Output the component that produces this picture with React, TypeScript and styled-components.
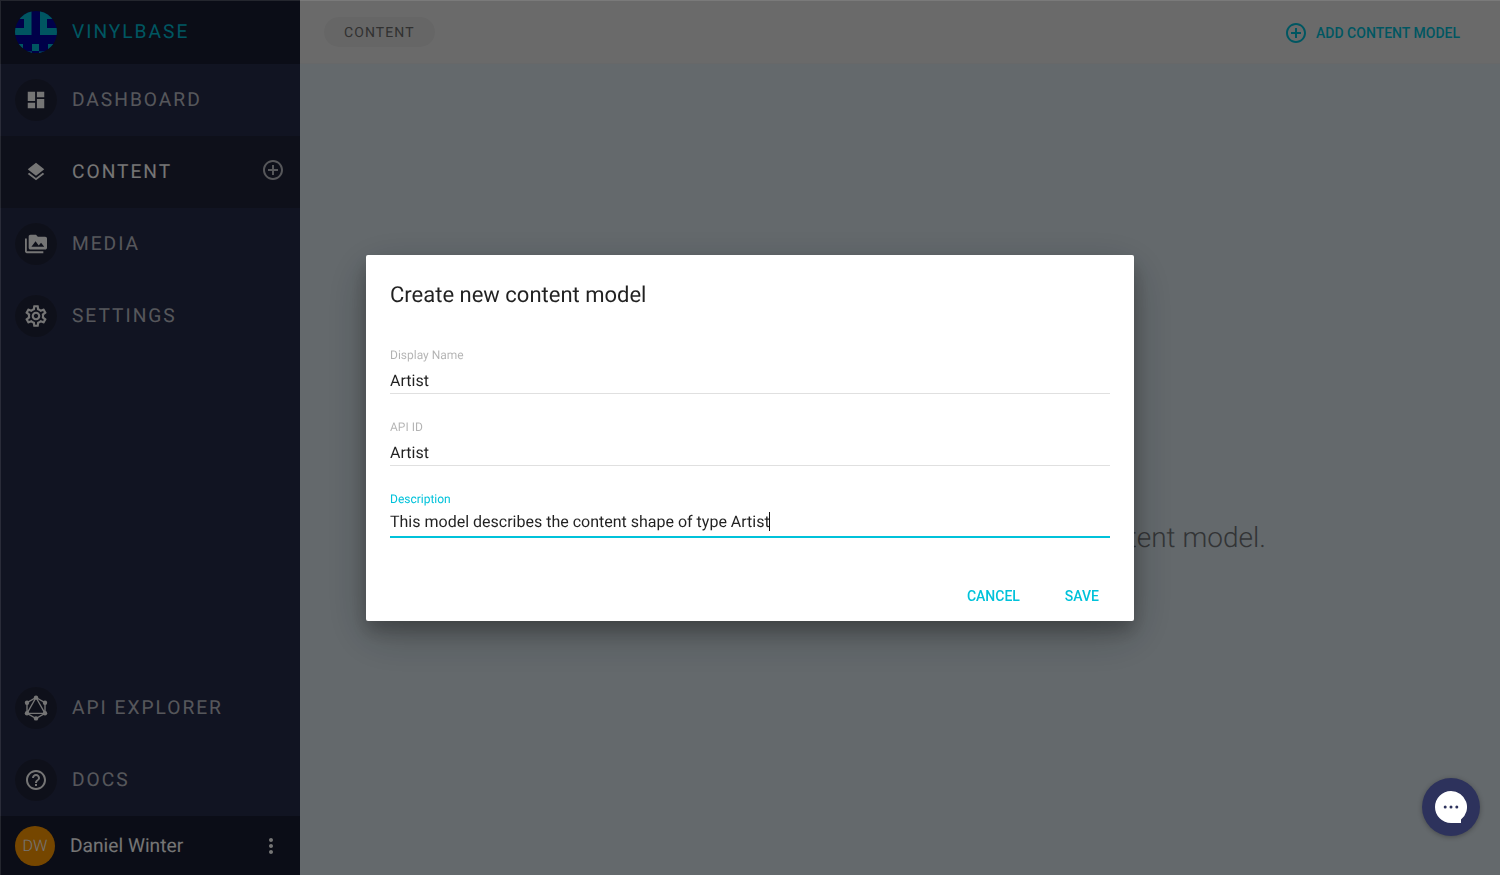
import React from "react";
import styled, { createGlobalStyle } from "styled-components";
import {
  MdDashboard,
  MdLayers,
  MdPermMedia,
  MdOutlineSettings,
  MdHelpOutline,
  MdAddCircleOutline,
  MdMoreVert,
} from "react-icons/md";

const GlobalStyle = createGlobalStyle`
  *, *::before, *::after { box-sizing: border-box; }
  body { margin: 0; font-family: Roboto, "Liberation Sans", sans-serif; overflow: hidden; text-rendering: geometricPrecision; }
  button { font-family: inherit; border: 0; background: none; padding: 0; cursor: pointer; }
  svg { display: block; }
`;

const Page = styled.div`
  display: flex;
  width: 100vw;
  height: 100vh;
  min-height: 875px;
`;

const Sidebar = styled.aside`
  display: flex;
  flex-direction: column;
  width: 300px;
  flex: none;
  background: #272d4b;
  color: #fff;
`;

const Brand = styled.div`
  display: flex;
  align-items: center;
  height: 64px;
  padding: 0 0 0 15px;
  gap: 15px;
  background: #191d32;
`;

const BrandName = styled.span`
  color: #00bcd4;
  font-size: 19.2px;
  letter-spacing: 1.98px;
  line-height: 24px;
`;

const NavItem = styled.a<{ $active?: boolean }>`
  display: flex;
  align-items: center;
  height: 72px;
  padding: 0 16px 0 15px;
  gap: 15px;
  font-size: 19.2px;
  letter-spacing: 1.98px;
  background: ${(p) => (p.$active ? "#20243a" : "transparent")};
  color: ${(p) => (p.$active ? "#fff" : "rgba(255, 255, 255, 0.7)")};
`;

const NavIcon = styled.span`
  display: flex;
  align-items: center;
  justify-content: center;
  width: 42px;
  height: 42px;
  border-radius: 50%;
  background: #20243a;
  color: #fff;
`;

const NavLabel = styled.span`
  flex: 1;
  line-height: 24px;
`;

const NavAdd = styled.button`
  color: rgba(255, 255, 255, 0.7);
  margin: 0 -1px 4px 0;
`;

const Spacer = styled.div`
  flex: 1;
`;

const UserBar = styled.div`
  display: flex;
  align-items: center;
  height: 59px;
  padding: 0 17px 0 15px;
  background: #191d32;
`;

const Avatar = styled.span`
  display: flex;
  align-items: center;
  justify-content: center;
  width: 40px;
  height: 40px;
  border-radius: 50%;
  background: #ff9800;
  color: #fff;
  font-size: 16px;
  font-weight: 300;
`;

const UserName = styled.span`
  flex: 1;
  margin: 1px 0 0 15px;
  font-size: 19.2px;
  line-height: 24px;
`;

const Main = styled.main`
  display: flex;
  flex-direction: column;
  flex: 1;
  background: #d9e5ec;
`;

const Toolbar = styled.header`
  display: flex;
  align-items: center;
  justify-content: space-between;
  height: 64px;
  padding: 0 40px 0 24px;
  background: #e8e8e8;
  border-bottom: 1px solid #e0e2e4;
`;

const Crumb = styled.span`
  display: flex;
  align-items: center;
  height: 30px;
  padding: 2px 20px 0;
  border-radius: 15px;
  background: #dedede;
  color: #6b6b6b;
  font-size: 14px;
  letter-spacing: 1.1px;
`;

const AddModel = styled.button`
  display: flex;
  align-items: center;
  gap: 8px;
  margin-top: 3px;
  color: #00bcd4;
  font-size: 14px;
  font-weight: 500;
`;

const EmptyState = styled.div`
  display: flex;
  align-items: center;
  justify-content: flex-end;
  flex: 1;
  padding: 136px 234px 0 0;
  color: #6f7275;
  font-size: 28px;
  font-weight: 300;
`;

const Overlay = styled.div`
  position: fixed;
  inset: 0;
  display: flex;
  align-items: center;
  justify-content: center;
  background: rgba(0, 0, 0, 0.54);
  box-shadow: inset 1px 1px 0 rgba(255, 255, 255, 0.1);
`;

const Dialog = styled.section`
  display: flex;
  flex-direction: column;
  width: 768px;
  height: 366px;
  margin-top: 1px;
  padding: 25px 24px 24px;
  border-radius: 2px;
  background: #fff;
  box-shadow: 0 14px 45px rgba(0, 0, 0, 0.25), 0 10px 18px rgba(0, 0, 0, 0.22);
`;

const DialogTitle = styled.h3`
  flex: none;
  margin: 0 0 36px;
  color: rgba(0, 0, 0, 0.87);
  font-size: 22px;
  font-weight: 400;
  line-height: 32px;
`;

const Field = styled.label<{ $focused?: boolean }>`
  display: flex;
  flex: none;
  flex-direction: column;
  height: 72px;
  color: ${(p) => (p.$focused ? "#00c2da" : "rgba(0, 0, 0, 0.3)")};
  font-size: 12px;
  line-height: 14px;
`;

const FieldLabel = styled.span`
  flex: none;
`;

const FieldValue = styled.span<{ $focused?: boolean }>`
  display: flex;
  align-items: center;
  height: 32px;
  padding-top: ${(p) => (p.$focused ? "1px" : "6px")};
  border-bottom: ${(p) => (p.$focused ? "2px solid #00c2da" : "1px solid #e0e0e0")};
  color: rgba(0, 0, 0, 0.87);
  font-size: 16px;
  line-height: 20px;
`;

const Caret = styled.i`
  width: 1px;
  height: 19px;
  margin-left: -1px;
  background: #111;
`;

const Actions = styled.div`
  display: flex;
  justify-content: flex-end;
  margin-top: 24px;
  padding-right: 11px;
  gap: 45px;
`;

const ActionButton = styled.button`
  color: #00c2da;
  font-size: 14px;
  font-weight: 500;
  line-height: 16px;
`;

const ChatButton = styled.button`
  position: fixed;
  right: 20.5px;
  bottom: 39px;
  display: flex;
  align-items: center;
  justify-content: center;
  width: 58px;
  height: 58px;
  border-radius: 50%;
  background: #2d325c;
  box-shadow: 0 1px 5px rgba(0, 0, 0, 0.3);
`;

const BrandMark = () => (
  <svg width="42" height="42" viewBox="0 0 42 42">
    <clipPath id="mark">
      <circle cx="21" cy="21" r="21" />
    </clipPath>
    <g clipPath="url(#mark)">
      <rect width="42" height="42" fill="#0000a0" />
      <path
        fill="#00bcd4"
        d="M0 0H16.5V24H0V17H9V8H0ZM42 0H25V24H42V17H32V8H42ZM17 33H24V40H17ZM0 33H8V40H0ZM33 33H42V40H33ZM8 40.6H17V42H8ZM24 40.6H33V42H24Z"
      />
    </g>
  </svg>
);

const GraphIcon = () => (
  <svg width="24" height="26" viewBox="0 0 24 26" fill="none" stroke="currentColor">
    <path strokeWidth="1.35" d="M12 2.5 21 7.7V18.3L12 23.5 3 18.3V7.7ZM12 2.5 21 18.3H3Z" />
    <g fill="currentColor" stroke="none">
      <circle cx="12" cy="2.6" r="2.2" />
      <circle cx="21" cy="7.7" r="2.2" />
      <circle cx="21" cy="18.3" r="2.2" />
      <circle cx="12" cy="23.4" r="2.2" />
      <circle cx="3" cy="18.3" r="2.2" />
      <circle cx="3" cy="7.7" r="2.2" />
    </g>
  </svg>
);

const ChatIcon = () => (
  <svg width="32" height="32" viewBox="0 0 32 32">
    <path fill="#fff" d="M16 0A16 16 0 1 0 16 32H26V28.5A16 16 0 0 0 16 0Z" />
    <g fill="#2d325c">
      <circle cx="10.2" cy="16" r="1.5" />
      <circle cx="16" cy="16" r="1.5" />
      <circle cx="21.8" cy="16" r="1.5" />
    </g>
  </svg>
);

export default function App() {
  return (
    <>
      <GlobalStyle />
      <Page>
        <Sidebar>
          <Brand>
            <BrandMark />
            <BrandName>VINYLBASE</BrandName>
          </Brand>
          <NavItem>
            <NavIcon><MdDashboard size={22} /></NavIcon>
            <NavLabel>DASHBOARD</NavLabel>
          </NavItem>
          <NavItem $active>
            <NavIcon><MdLayers size={22} /></NavIcon>
            <NavLabel>CONTENT</NavLabel>
            <NavAdd><MdAddCircleOutline size={24} /></NavAdd>
          </NavItem>
          <NavItem>
            <NavIcon><MdPermMedia size={22} /></NavIcon>
            <NavLabel>MEDIA</NavLabel>
          </NavItem>
          <NavItem>
            <NavIcon><MdOutlineSettings size={26} /></NavIcon>
            <NavLabel>SETTINGS</NavLabel>
          </NavItem>
          <Spacer />
          <NavItem>
            <NavIcon><GraphIcon /></NavIcon>
            <NavLabel>API EXPLORER</NavLabel>
          </NavItem>
          <NavItem>
            <NavIcon><MdHelpOutline size={24} /></NavIcon>
            <NavLabel>DOCS</NavLabel>
          </NavItem>
          <UserBar>
            <Avatar>DW</Avatar>
            <UserName>Daniel Winter</UserName>
            <MdMoreVert size={24} />
          </UserBar>
        </Sidebar>
        <Main>
          <Toolbar>
            <Crumb>CONTENT</Crumb>
            <AddModel>
              <MdAddCircleOutline size={24} />
              ADD CONTENT MODEL
            </AddModel>
          </Toolbar>
          <EmptyState>Get started by creating a new content model.</EmptyState>
        </Main>
      </Page>
      <Overlay>
        <Dialog>
          <DialogTitle>Create new content model</DialogTitle>
          <Field>
            <FieldLabel>Display Name</FieldLabel>
            <FieldValue>Artist</FieldValue>
          </Field>
          <Field>
            <FieldLabel>API ID</FieldLabel>
            <FieldValue>Artist</FieldValue>
          </Field>
          <Field $focused>
            <FieldLabel>Description</FieldLabel>
            <FieldValue $focused>
              This model describes the content shape of type Artist
              <Caret />
            </FieldValue>
          </Field>
          <Actions>
            <ActionButton>CANCEL</ActionButton>
            <ActionButton>SAVE</ActionButton>
          </Actions>
        </Dialog>
      </Overlay>
      <ChatButton>
        <ChatIcon />
      </ChatButton>
    </>
  );
}
